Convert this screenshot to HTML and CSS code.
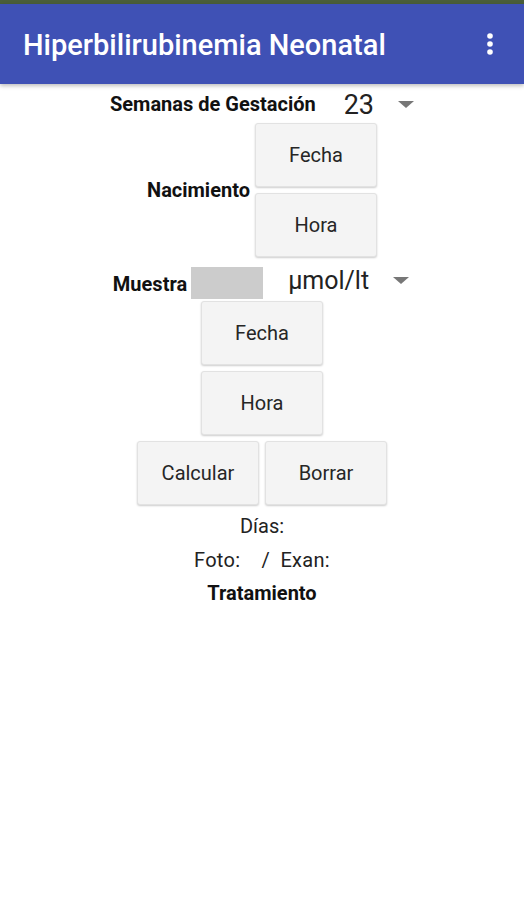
FILE: index.html
```html
<!DOCTYPE html>
<html lang="es">
<head>
    <meta charset="UTF-8">
    <meta name="viewport" content="width=device-width, initial-scale=1.0">
    <link rel="stylesheet" href="styles.css">
</head>
<body>
<div class="status-bar"></div>
<div class="app-bar">
    <span class="app-title">Hiperbilirubinemia Neonatal</span>
    <svg class="menu-icon" width="10" height="24" viewBox="0 0 10 24">
        <circle cx="5" cy="4" r="2.8" fill="#fff"/>
        <circle cx="5" cy="12" r="2.8" fill="#fff"/>
        <circle cx="5" cy="20" r="2.8" fill="#fff"/>
    </svg>
</div>

<div class="content">
    <div class="row row-semanas">
        <span class="label">Semanas de Gestación</span>
        <div class="spinner">
            <span class="spinner-value small">23</span>
            <span class="arrow"></span>
        </div>
    </div>

    <div class="row">
        <span class="label">Nacimiento</span>
        <div class="btn-stack">
            <div class="btn">Fecha</div>
            <div class="btn">Hora</div>
        </div>
    </div>

    <div class="row row-muestra">
        <span class="label">Muestra</span>
        <span class="input-box"></span>
        <div class="spinner spinner-unit">
            <span class="spinner-value">μmol/lt</span>
            <span class="arrow"></span>
        </div>
    </div>

    <div class="btn-stack">
        <div class="btn">Fecha</div>
        <div class="btn">Hora</div>
    </div>

    <div class="btn-pair">
        <div class="btn">Calcular</div>
        <div class="btn">Borrar</div>
    </div>

    <div class="results">
        <div class="result">Días:</div>
        <div class="result spaced">Foto: &nbsp;&nbsp;&nbsp;/&nbsp; Exan:</div>
        <div class="result bold">Tratamiento</div>
    </div>
</div>
</body>
</html>
```

FILE: styles.css
```css
body {
    margin: 0;
    font-family: Roboto, "Liberation Sans", sans-serif;
    background: #fff;
    color: #222;
}

.status-bar {
    height: 4px;
    background: #4a5e3a;
}

.app-bar {
    height: 80px;
    background: #3f51b5;
    display: flex;
    align-items: center;
    justify-content: space-between;
    padding: 0 29px 0 23px;
    box-shadow: 0 2px 4px rgba(0, 0, 0, 0.25);
    position: relative;
}

.app-title {
    color: #fff;
    font-size: 29px;
    font-weight: 500;
    margin-top: 2px;
}

.content {
    display: flex;
    flex-direction: column;
    align-items: center;
}

.row {
    display: flex;
    align-items: center;
}

.row-semanas {
    height: 37px;
    margin-top: 2px;
}

.row-muestra {
    height: 42px;
    margin-top: 2px;
    padding-right: 2px;
}

.label {
    font-size: 20px;
    font-weight: bold;
    color: #111;
    margin-right: 5px;
}

.row-semanas .label {
    margin-top: -2px;
}

.row-muestra .label {
    margin-top: 8px;
    margin-right: 4px;
}

.spinner {
    display: flex;
    align-items: center;
    padding-left: 23px;
}

.spinner-value {
    font-size: 25px;
    color: #222;
}

.spinner-value.small {
    font-size: 27px;
}

.arrow {
    width: 0;
    height: 0;
    border-left: 8px solid transparent;
    border-right: 8px solid transparent;
    border-top: 7px solid #777;
    margin-left: 24px;
}

.spinner-unit {
    padding-left: 25px;
}

.input-box {
    width: 72px;
    height: 32px;
    background: #cccccc;
    margin-top: 5px;
}

.btn-stack {
    display: flex;
    flex-direction: column;
    gap: 6px;
}

.btn-pair {
    display: flex;
    gap: 6px;
    margin-top: 6px;
}

.btn {
    width: 122px;
    height: 64px;
    box-sizing: border-box;
    display: flex;
    align-items: center;
    justify-content: center;
    background: #f4f4f4;
    border: 1px solid #e2e2e2;
    border-radius: 3px;
    box-shadow: 0 1px 2px rgba(0, 0, 0, 0.2);
    font-size: 20px;
    color: #262626;
}

.results {
    display: flex;
    flex-direction: column;
    align-items: center;
    margin-top: 4px;
}

.result {
    height: 34px;
    line-height: 34px;
    font-size: 20px;
    color: #222;
}

.spaced {
    letter-spacing: 0.3px;
}

.bold {
    font-weight: bold;
    color: #111;
    margin-top: -1px;
}
```
